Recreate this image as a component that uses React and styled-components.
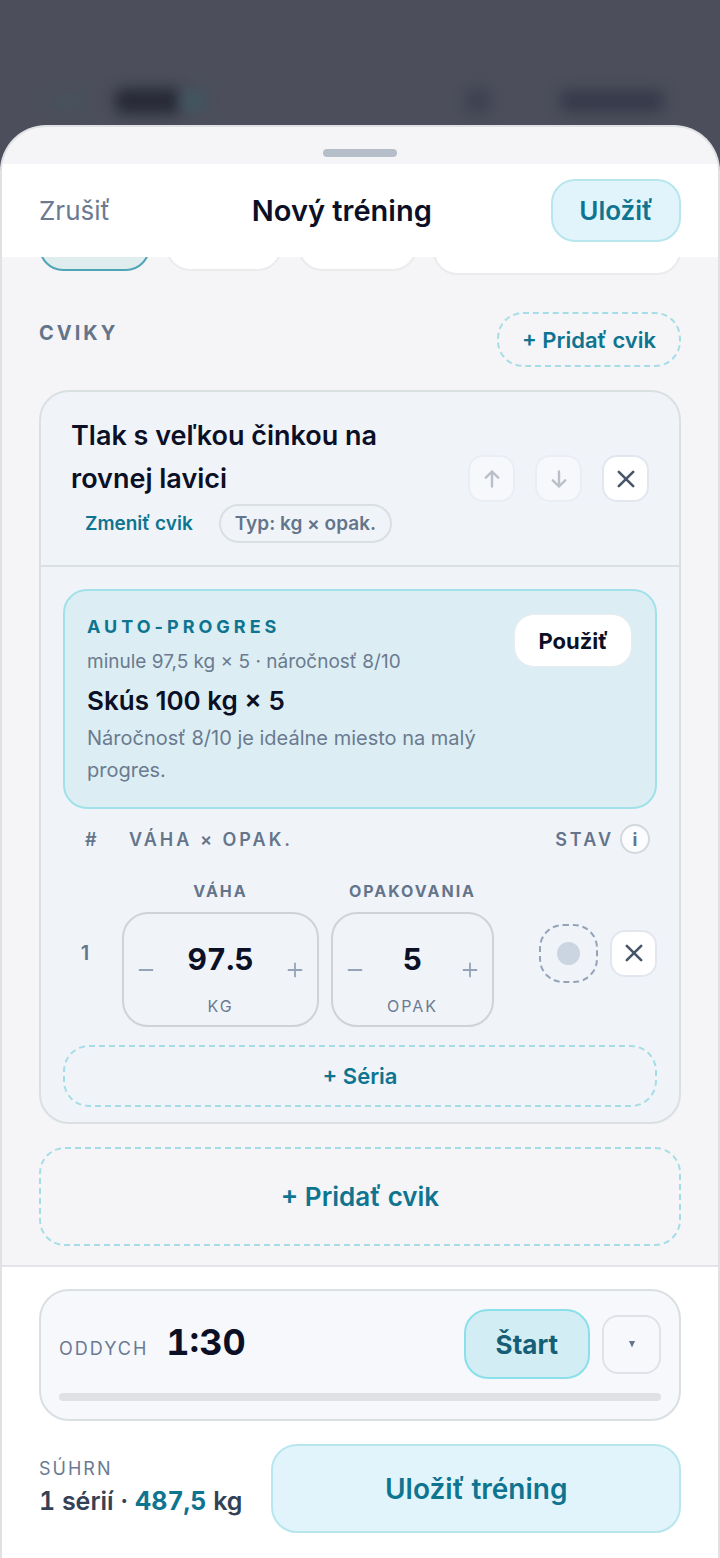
import React, { useState } from "react";
import styled, { createGlobalStyle, css } from "styled-components";

const Global = createGlobalStyle`
  *, *::before, *::after { box-sizing: border-box; }
  body {
    margin: 0;
    background: #4c4e5b;
    font-family: Inter, "Noto Sans", sans-serif;
    color: #0b1026;
  }
  button, input { font: inherit; color: inherit; margin: 0; padding: 0; border: 0; background: none; }
  button { cursor: pointer; white-space: nowrap; }
  h1, h2, h3, p { margin: 0; }
`;

const Page = styled.div`
  display: flex;
  flex-direction: column;
  min-height: 100vh;
`;

const Backdrop = styled.div`
  display: flex;
  align-items: center;
  justify-content: space-between;
  padding: 77px 56px 0 48px;
  height: 125px;
  flex: none;
  overflow: hidden;
`;

const SmudgeGroup = styled.div`
  display: flex;
  align-items: center;
  gap: ${(p) => p.$gap}px;
`;

const Smudge = styled.span`
  width: ${(p) => p.$w}px;
  height: ${(p) => p.$h}px;
  border-radius: 8px;
  background: ${(p) => p.$c};
  filter: blur(7px);
`;

const Sheet = styled.main`
  flex: 1;
  display: flex;
  flex-direction: column;
  background: #f5f5f7;
  border: 2px solid #dfe1e4;
  border-bottom: 0;
  border-radius: 46px 46px 0 0;
  overflow: hidden;
`;

const Grip = styled.div`
  display: flex;
  justify-content: center;
  padding: 22px 0 7px;

  &::after {
    content: "";
    width: 74px;
    height: 8px;
    border-radius: 4px;
    background: #b6bec9;
  }
`;

const Header = styled.header`
  display: flex;
  align-items: center;
  justify-content: space-between;
  padding: 15px 37px;
  background: #fff;
`;

const Title = styled.h1`
  font-size: 29px;
  line-height: 36px;
  font-weight: 600;
`;

const CancelButton = styled.button`
  padding-right: 22px;
  font-size: 26px;
  color: #6b7a93;
`;

const SaveButton = styled.button`
  height: ${(p) => (p.$large ? 89 : 63)}px;
  padding: 0 26px;
  border: 2px solid #b7e6ee;
  border-radius: ${(p) => (p.$large ? 26 : 24)}px;
  background: #e2f4fb;
  color: #0e7490;
  font-size: ${(p) => (p.$large ? 28 : 26)}px;
  font-weight: 600;
  ${(p) => p.$large && css`flex: 1;`}
`;

const ChipViewport = styled.div`
  overflow: hidden;
  padding: 0 37px;
`;

const ChipRow = styled.div`
  display: flex;
  align-items: flex-start;
  gap: 16px;
  margin-top: -48px;
`;

const Chip = styled.button`
  flex: ${(p) => p.$size} 0 0;
  height: ${(p) => (p.$tall ? 66 : 62)}px;
  border: 2px solid ${(p) => (p.$active ? "#4fa5b8" : "#e9ebec")};
  border-radius: 24px;
  background: ${(p) => (p.$active ? "#e0edee" : "#fff")};
`;

const Content = styled.div`
  display: flex;
  flex-direction: column;
  gap: 23px;
  padding: 37px 37px 19px;
`;

const SectionHead = styled.div`
  display: flex;
  justify-content: space-between;
  align-items: flex-start;
`;

const SectionTitle = styled.h2`
  padding-top: 8px;
  font-size: 20px;
  line-height: 26px;
  font-weight: 700;
  letter-spacing: 3px;
  color: #64748b;
`;

const DashedButton = styled.button`
  height: ${(p) => p.$h}px;
  padding: 0 23px;
  border: 2px dashed #a5dde7;
  border-radius: 26px;
  font-size: ${(p) => p.$size}px;
  font-weight: 600;
  color: #0e7490;
`;

const Card = styled.section`
  border: 2px solid #dadfe2;
  border-radius: 30px;
  background: #f0f4f9;
`;

const CardHead = styled.div`
  display: flex;
  justify-content: space-between;
  align-items: center;
  padding: 22px 30px;
  border-bottom: 2px solid #dadfe2;
`;

const ExerciseInfo = styled.div`
  flex: 0 1 360px;
  display: flex;
  flex-direction: column;
  gap: 4px;
`;

const ExerciseName = styled.h3`
  font-size: 27px;
  line-height: 43px;
  font-weight: 600;
`;

const ExerciseMeta = styled.div`
  display: flex;
  align-items: center;
  gap: 12px;
  font-size: 19px;
`;

const ChangeButton = styled.button`
  padding: 0 14px;
  color: #0e7490;
  font-weight: 600;
`;

const TypeButton = styled.button`
  height: 39px;
  padding: 0 14px;
  border: 2px solid #dadfe2;
  border-radius: 20px;
  color: #64748b;
  font-weight: 600;
`;

const Actions = styled.div`
  display: flex;
  align-items: center;
  justify-content: flex-end;
  gap: ${(p) => p.$gap}px;
`;

const IconButton = styled.button`
  display: grid;
  place-items: center;
  width: 47px;
  height: 47px;
  border: 2px solid #e2e7ef;
  border-radius: 15px;
  background: #fff;
  color: #475569;

  &:disabled {
    opacity: 0.4;
    color: #6b7280;
    cursor: default;
  }
`;

const CardBody = styled.div`
  display: flex;
  flex-direction: column;
  padding: 22px 22px 15px;
`;

const Suggestion = styled.div`
  display: flex;
  justify-content: space-between;
  align-items: flex-start;
  gap: 16px;
  padding: 23px 23px 21px 22px;
  border: 2px solid #a0e1ea;
  border-radius: 24px;
  background: #dceef3;
`;

const SuggestionText = styled.div`
  flex: 0 1 408px;
  display: flex;
  flex-direction: column;
`;

const Kicker = styled.p`
  font-size: 18px;
  line-height: 26px;
  font-weight: 700;
  letter-spacing: 4px;
  color: #0e7490;
`;

const Muted = styled.p`
  font-size: ${(p) => p.$size}px;
  line-height: ${(p) => p.$line}px;
  color: #6b7a90;
`;

const Target = styled.p`
  padding-bottom: 4px;
  font-size: 26px;
  line-height: 34px;
  font-weight: 600;
`;

const ApplyButton = styled.button`
  height: 53px;
  padding: 0 23px;
  border: 1px solid #e7ecf0;
  border-radius: 20px;
  background: #fff;
  font-size: 22px;
  font-weight: 700;
`;

const SetHead = styled.div`
  display: grid;
  grid-template-columns: 44px 1fr auto 30px;
  align-items: center;
  padding: 15px 7px 0 22px;
  font-size: 18px;
  font-weight: 600;
  letter-spacing: 3px;
  color: #64748b;
`;

const StatusLabel = styled.span`
  padding-right: 6px;
`;

const InfoButton = styled.button`
  display: grid;
  place-items: center;
  width: 30px;
  height: 30px;
  border: 2px solid #d3d8de;
  border-radius: 50%;
  background: #fafcfe;
  font-weight: 700;
`;

const SetRow = styled.div`
  display: grid;
  grid-template-columns: 47px minmax(0, 197fr) minmax(0, 163fr) 151px;
  column-gap: 12px;
  align-items: center;
  padding: 25px 0 18px;
`;

const SetIndex = styled.span`
  padding-right: 3px;
  text-align: center;
  font-size: 20px;
  font-weight: 600;
  color: #64748b;
`;

const FieldName = styled.label`
  text-align: center;
  font-size: 16px;
  line-height: 24px;
  font-weight: 700;
  letter-spacing: 2px;
  color: #64748b;
`;

const Field = styled.div`
  display: flex;
  flex-direction: column;
  gap: 9px;
`;

const Stepper = styled.div`
  display: grid;
  grid-template-columns: 44px minmax(0, 1fr) 44px;
  align-items: center;
  height: 115px;
  border: 2px solid #cfd3d7;
  border-radius: 26px;
`;

const StepButton = styled.button`
  height: 60px;
  display: grid;
  place-items: center;
  color: #94a3b8;
`;

const StepValue = styled.div`
  display: flex;
  flex-direction: column;
  align-items: center;
  gap: 16px;
  padding-top: 15px;
`;

const ValueInput = styled.input`
  width: 100%;
  height: 42px;
  text-align: center;
  font-size: 30px;
  font-weight: 700;
  font-variant-numeric: tabular-nums;
  outline: none;
`;

const Unit = styled.span`
  font-size: 16px;
  line-height: 20px;
  letter-spacing: 2px;
  color: #6b7a93;
`;

const DoneButton = styled.button`
  display: grid;
  place-items: center;
  width: 59px;
  height: 59px;
  border: 2px dashed #94a3b8;
  border-radius: 24px;

  &::after {
    content: "";
    width: 23px;
    height: 23px;
    border-radius: 50%;
    background: #cbd5e1;
  }
`;

const Footer = styled.footer`
  flex: 1;
  display: flex;
  flex-direction: column;
  gap: 23px;
  padding: 22px 37px 26px;
  border-top: 2px solid #e3e5e8;
  background: #fff;
`;

const Timer = styled.div`
  display: flex;
  flex-direction: column;
  gap: 14px;
  padding: 18px;
  border: 2px solid #dadfe2;
  border-radius: 30px;
  background: #f6f8fc;
`;

const TimerRow = styled.div`
  display: flex;
  align-items: center;
  justify-content: space-between;
`;

const TimerReading = styled.div`
  display: flex;
  align-items: baseline;
  gap: 18px;
  padding-bottom: 4px;
`;

const Caption = styled.span`
  font-size: 18px;
  line-height: 26px;
  letter-spacing: 2px;
  color: #6b7a93;
`;

const Clock = styled.strong`
  font-size: 36px;
  line-height: 44px;
  font-weight: 700;
  font-variant-numeric: tabular-nums;
`;

const StartButton = styled.button`
  height: 70px;
  padding: 0 30px;
  border: 2px solid #8ae0ea;
  border-radius: 24px;
  background: #d3edf4;
  color: #155e75;
  font-size: 26px;
  font-weight: 700;
`;

const MoreButton = styled.button`
  display: grid;
  place-items: center;
  width: 59px;
  height: 59px;
  border: 2px solid #dfe2e6;
  border-radius: 16px;
  color: #64748b;
`;

const Track = styled.div`
  height: 8px;
  border-radius: 4px;
  background: #dfe1e5;
`;

const SummaryRow = styled.div`
  display: flex;
  align-items: center;
  gap: 29px;
`;

const Summary = styled.div`
  display: flex;
  flex-direction: column;
  gap: 2px;
  padding-bottom: 3px;
`;

const SummaryText = styled.p`
  font-size: 25px;
  line-height: 34px;
  font-weight: 600;
  font-variant-numeric: tabular-nums;
  color: #334155;
  white-space: nowrap;
`;

const Volume = styled.span`
  font-weight: 700;
  color: #0e7490;
`;

const Icon = ({ d, size = 20, width = 2 }) => (
  <svg width={size} height={size} viewBox="0 0 20 20" fill="none" stroke="currentColor"
    strokeWidth={width} strokeLinecap="round" strokeLinejoin="round" aria-hidden="true">
    <path d={d} />
  </svg>
);

const CROSS = "M2.8 2.8 17.2 17.2M17.2 2.8 2.8 17.2";
const UP = "M10 17.5V2.5M3.8 8.7 10 2.5 16.2 8.7";
const DOWN = "M10 2.5V17.5M3.8 11.3 10 17.5 16.2 11.3";
const MINUS = "M3.5 10H16.5";
const PLUS = "M3.5 10H16.5M10 3.5V16.5";

function NumberField({ id, label, unit, start, step }) {
  const [value, setValue] = useState(start);
  const shift = (by) => setValue(String(Math.max(0, Number(value) + by)));
  return (
    <Field>
      <FieldName htmlFor={id}>{label}</FieldName>
      <Stepper>
        <StepButton type="button" aria-label={`${label} −`} onClick={() => shift(-step)}>
          <Icon d={MINUS} width={1.8} />
        </StepButton>
        <StepValue>
          <ValueInput id={id} inputMode="decimal" value={value} onChange={(e) => setValue(e.target.value)} />
          <Unit>{unit}</Unit>
        </StepValue>
        <StepButton type="button" aria-label={`${label} +`} onClick={() => shift(step)}>
          <Icon d={PLUS} width={1.8} />
        </StepButton>
      </Stepper>
    </Field>
  );
}

export default function App() {
  return (
    <>
      <Global />
      <Page>
        <Backdrop aria-hidden="true">
          <SmudgeGroup $gap={27}>
            <Smudge $w={40} $h={14} $c="#47545e" />
            <SmudgeGroup $gap={0}>
              <Smudge $w={66} $h={26} $c="#282a38" />
              <Smudge $w={24} $h={22} $c="#405761" />
            </SmudgeGroup>
          </SmudgeGroup>
          <SmudgeGroup $gap={69}>
            <Smudge $w={26} $h={26} $c="#3f4251" />
            <Smudge $w={104} $h={22} $c="#363a4a" />
          </SmudgeGroup>
        </Backdrop>
        <Sheet>
          <Grip />
          <Header>
            <CancelButton type="button">Zrušiť</CancelButton>
            <Title>Nový tréning</Title>
            <SaveButton type="button">Uložiť</SaveButton>
          </Header>
          <ChipViewport>
            <ChipRow>
              <Chip type="button" aria-label="1" $size={110} $active />
              <Chip type="button" aria-label="2" $size={115} />
              <Chip type="button" aria-label="3" $size={118} />
              <Chip type="button" aria-label="4" $size={251} $tall />
            </ChipRow>
          </ChipViewport>
          <Content>
            <SectionHead>
              <SectionTitle>CVIKY</SectionTitle>
              <DashedButton type="button" $h={55} $size={22}>+ Pridať cvik</DashedButton>
            </SectionHead>
            <Card>
              <CardHead>
                <ExerciseInfo>
                  <ExerciseName>Tlak s veľkou činkou na rovnej lavici</ExerciseName>
                  <ExerciseMeta>
                    <ChangeButton type="button">Zmeniť cvik</ChangeButton>
                    <TypeButton type="button">Typ: kg × opak.</TypeButton>
                  </ExerciseMeta>
                </ExerciseInfo>
                <Actions $gap={20}>
                  <IconButton type="button" aria-label="Posunúť hore" disabled><Icon d={UP} width={2.4} /></IconButton>
                  <IconButton type="button" aria-label="Posunúť dole" disabled><Icon d={DOWN} width={2.4} /></IconButton>
                  <IconButton type="button" aria-label="Odstrániť cvik"><Icon d={CROSS} width={2.6} /></IconButton>
                </Actions>
              </CardHead>
              <CardBody>
                <Suggestion>
                  <SuggestionText>
                    <Kicker>AUTO-PROGRES</Kicker>
                    <Muted $size={19} $line={44}>minule 97,5 kg × 5 · náročnosť 8/10</Muted>
                    <Target>Skús 100 kg × 5</Target>
                    <Muted $size={20} $line={32}>Náročnosť 8/10 je ideálne miesto na malý progres.</Muted>
                  </SuggestionText>
                  <ApplyButton type="button">Použiť</ApplyButton>
                </Suggestion>
                <SetHead>
                  <span>#</span>
                  <span>VÁHA × OPAK.</span>
                  <StatusLabel>STAV</StatusLabel>
                  <InfoButton type="button">i</InfoButton>
                </SetHead>
                <SetRow>
                  <SetIndex>1</SetIndex>
                  <NumberField id="weight" label="VÁHA" unit="KG" start="97.5" step={2.5} />
                  <NumberField id="reps" label="OPAKOVANIA" unit="OPAK" start="5" step={1} />
                  <Actions $gap={12}>
                    <DoneButton type="button" aria-label="Hotovo" />
                    <IconButton type="button" aria-label="Odstrániť sériu"><Icon d={CROSS} width={2.6} /></IconButton>
                  </Actions>
                </SetRow>
                <DashedButton type="button" $h={62} $size={22}>+ Séria</DashedButton>
              </CardBody>
            </Card>
            <DashedButton type="button" $h={99} $size={26}>+ Pridať cvik</DashedButton>
          </Content>
          <Footer>
            <Timer>
              <TimerRow>
                <TimerReading>
                  <Caption>ODDYCH</Caption>
                  <Clock>1:30</Clock>
                </TimerReading>
                <Actions $gap={12}>
                  <StartButton type="button">Štart</StartButton>
                  <MoreButton type="button" aria-label="Možnosti oddychu">
                    <svg width="8" height="8" viewBox="0 0 8 8" fill="currentColor" aria-hidden="true">
                      <path d="M1 1H7L4 7.5Z" />
                    </svg>
                  </MoreButton>
                </Actions>
              </TimerRow>
              <Track role="progressbar" aria-label="Oddych" aria-valuenow={0} />
            </Timer>
            <SummaryRow>
              <Summary>
                <Caption>SÚHRN</Caption>
                <SummaryText>1 sérií · <Volume>487,5</Volume> kg</SummaryText>
              </Summary>
              <SaveButton type="button" $large>Uložiť tréning</SaveButton>
            </SummaryRow>
          </Footer>
        </Sheet>
      </Page>
    </>
  );
}
